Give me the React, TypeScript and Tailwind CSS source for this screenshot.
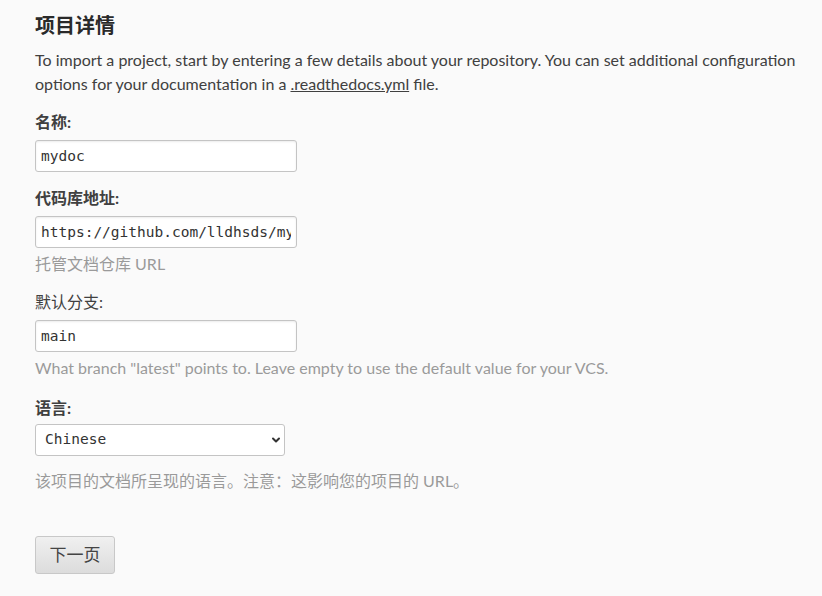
import { ChevronDown } from 'lucide-react';

const font = { fontFamily: 'Lato, "Noto Sans CJK SC", sans-serif' };

function TextField({ label, value, help, bold = true }: { label: string; value: string; help?: string; bold?: boolean }) {
  return (
    <div>
      <label className={`block text-[16px] leading-[24px] text-[#404040] ${bold ? 'font-bold' : 'font-normal'}`}>
        {label}
      </label>
      <input
        readOnly
        value={value}
        className="mt-[6px] block h-[32px] w-[262px] rounded-[3px] border border-[#c4c4c4] bg-white px-[5px] font-['DejaVu_Sans_Mono',monospace] text-[14.5px] text-[#333] shadow-[inset_0_1px_2px_rgba(0,0,0,0.08)] outline-none"
      />
      {help && <p className="mt-[4px] text-[16px] leading-[24px] text-[#9a9a9a]">{help}</p>}
    </div>
  );
}

export default function App() {
  return (
    <div className="min-h-[596px] w-full bg-[#fafafa]" style={font}>
      <div className="w-[815px] pl-[35px] pt-[11px]">
        <h1 className="text-[20px] font-bold leading-[28px] text-[#2a2a2a]">项目详情</h1>
        <p className="mt-[9px] text-[16px] leading-[24px] text-[#404040]">
          To import a project, start by entering a few details about your repository. You can set additional configuration
          options for your documentation in a <a className="underline">.readthedocs.yml</a> file.
        </p>

        <div className="mt-[14px] flex flex-col">
          <TextField label="名称:" value="mydoc" />
          <div className="mt-[14px]">
            <TextField label="代码库地址:" value="https://github.com/lldhsds/mydoc" help="托管文档仓库 URL" />
          </div>
          <div className="mt-[14px]">
            <TextField
              label="默认分支:"
              value="main"
              bold={false}
              help={'What branch "latest" points to. Leave empty to use the default value for your VCS.'}
            />
          </div>

          <div className="mt-[16px]">
            <label className="block text-[16px] font-bold leading-[24px] text-[#404040]">语言:</label>
            <div className="relative mt-[4px] w-[250px]">
              <select
                defaultValue="zh"
                className="block h-[32px] w-[250px] appearance-none rounded-[3px] border border-[#c4c4c4] bg-white pl-[9px] font-['DejaVu_Sans_Mono',monospace] text-[14.5px] text-[#333] outline-none"
              >
                <option value="zh">Chinese</option>
              </select>
              <ChevronDown className="pointer-events-none absolute right-[3px] top-[10px] h-[12px] w-[12px] text-[#333]" strokeWidth={4} />
            </div>
            <p className="mt-[13px] text-[16px] leading-[24px] text-[#9a9a9a]">该项目的文档所呈现的语言。注意：这影响您的项目的 URL。</p>
          </div>
        </div>

        <button className="mt-[43px] h-[38px] w-[80px] rounded-[3px] border border-[#c8c8c8] bg-gradient-to-b from-[#f0f0f0] to-[#dcdcdc] text-[17px] text-[#444]">
          下一页
        </button>
      </div>
    </div>
  );
}
